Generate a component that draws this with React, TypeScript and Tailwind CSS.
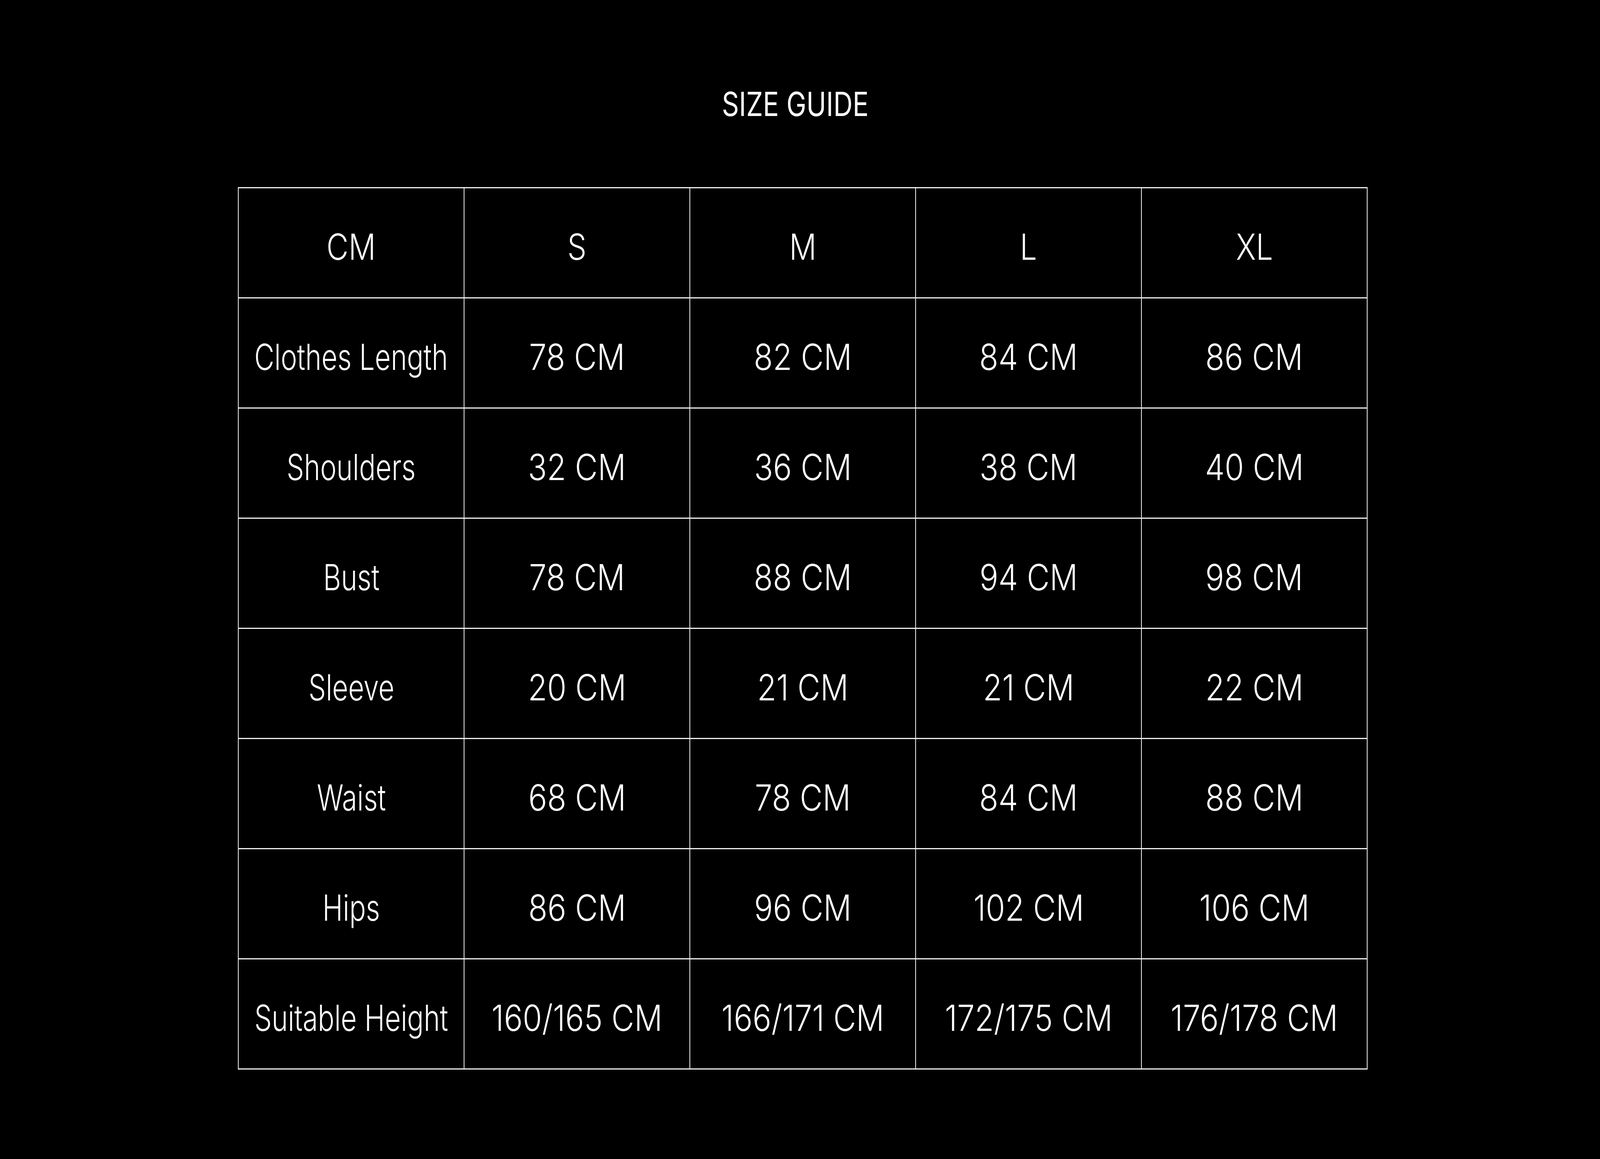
import React from "react";

const headers = ["CM", "S", "M", "L", "XL"];
const rows: string[][] = [
  ["Clothes Length", "78 CM", "82 CM", "84 CM", "86 CM"],
  ["Shoulders", "32 CM", "36 CM", "38 CM", "40 CM"],
  ["Bust", "78 CM", "88 CM", "94 CM", "98 CM"],
  ["Sleeve", "20 CM", "21 CM", "21 CM", "22 CM"],
  ["Waist", "68 CM", "78 CM", "84 CM", "88 CM"],
  ["Hips", "86 CM", "96 CM", "102 CM", "106 CM"],
  ["Suitable Height", "160/165 CM", "166/171 CM", "172/175 CM", "176/178 CM"],
];

const DESIGN_W = 6959;

function useWidthRatio() {
  const get = () => (typeof window !== "undefined" ? window.innerWidth / DESIGN_W : 1);
  const [r, setR] = React.useState(get);
  React.useEffect(() => {
    const on = () => setR(get());
    window.addEventListener("resize", on);
    return () => window.removeEventListener("resize", on);
  }, []);
  return r;
}

function Cell({ text, k, sx }: { text: string; k: number; sx: number }) {
  return (
    <div className="h-[282px] border-r-[2px] border-b-[3px] border-[#f0f0f0] flex items-center justify-center pt-[20px] overflow-visible">
      <span
        className="inline-block whitespace-nowrap text-[92px] leading-none font-light text-white"
        style={{ transform: `scaleX(${k * sx})` }}
      >
        {text}
      </span>
    </div>
  );
}

export default function App() {
  const sx = useWidthRatio();
  const all = [headers, ...rows];
  return (
    <div
      className="w-full h-[2967px] bg-black overflow-hidden"
      style={{ fontFamily: "Inter, 'Liberation Sans', sans-serif" }}
    >
      <div className="pt-[224px] flex justify-center pr-[0.575%]">
        <span
          className="inline-block text-[85px] leading-none font-normal text-white whitespace-nowrap"
          style={{ transform: `scaleX(${1.365 * sx})` }}
        >
          SIZE GUIDE
        </span>
      </div>
      <div className="pt-[170px] pl-[14.873%]">
        <div className="w-[82.94%] grid grid-cols-5 border-l-[2px] border-t-[3px] border-[#f0f0f0]">
          {all.map((r, i) =>
            r.map((c, j) => (
              <Cell
                key={`${i}-${j}`}
                text={c}
                sx={sx}
                k={i === 0 ? 1.43 : j === 0 ? 1.3 : 1.48}
              />
            ))
          )}
        </div>
      </div>
    </div>
  );
}
